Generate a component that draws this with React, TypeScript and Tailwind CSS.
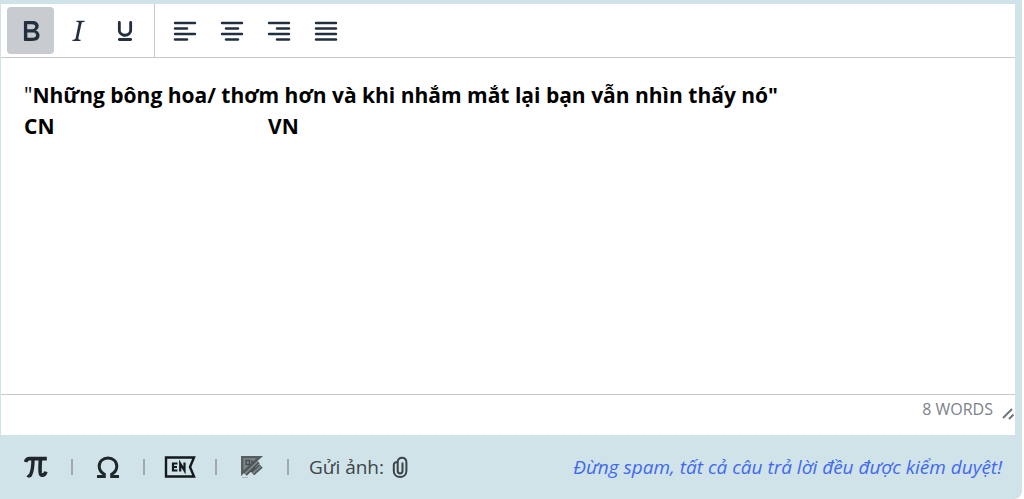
import { useState, type ReactNode } from "react";

const ALIGN_LINES = {
  left: ["M2 2h20", "M2 7.500h12", "M2 13h20", "M2 18.500h12"],
  center: ["M2 2h20", "M6 7.500h12", "M2 13h20", "M6 18.500h12"],
  right: ["M2 2h20", "M10 7.500h12", "M2 13h20", "M10 18.500h12"],
  justify: ["M2 2h20", "M2 7.500h20", "M2 13h20", "M2 18.500h20"],
};

type Align = keyof typeof ALIGN_LINES;

function AlignIcon({ align }: { align: Align }) {
  return (
    <svg
      viewBox="0 0 24 20"
      className="h-5 w-6"
      fill="none"
      stroke="#222f3e"
      strokeWidth="2.4"
      strokeLinecap="round"
    >
      {ALIGN_LINES[align].map((d) => (
        <path key={d} d={d} />
      ))}
    </svg>
  );
}

function BoldIcon() {
  return (
    <svg viewBox="0 0 24 24" className="size-[34px]" fill="#222f3e">
      <path
        fillRule="evenodd"
        d="M7.8 19c-.3 0-.5 0-.6-.2l-.2-.5V5.7c0-.2 0-.4.2-.5l.6-.2h5c1.5 0 2.7.3 3.5 1 .7.6 1.1 1.4 1.1 2.5a3 3 0 0 1-.6 1.9c-.4.6-1 1-1.6 1.2.4.1.9.3 1.3.6s.8.7 1 1.2c.4.4.5 1 .5 1.6 0 1.3-.4 2.3-1.3 3-.8.7-2.1 1-3.8 1H7.8Zm5-8.3c.6 0 1.2-.1 1.6-.5.4-.3.6-.7.6-1.3 0-1.1-.8-1.7-2.3-1.7H9.3v3.5h3.4Zm.5 6c.7 0 1.3-.1 1.7-.4.4-.4.6-.9.6-1.5s-.2-1-.7-1.4c-.4-.3-1-.4-2-.4H9.4v3.8h4Z"
      />
    </svg>
  );
}

function ItalicIcon() {
  return (
    <svg viewBox="0 0 24 24" className="size-[34px]" fill="#222f3e">
      <path
        fillRule="evenodd"
        d="m16.7 4.7-.1.9h-.3c-.6 0-1 0-1.4.3-.3.3-.4.6-.5 1.1l-2.1 9.800v.6c0 .5.4.8 1.4.8h.2l-.2.8H8l.2-.8h.2c1.1 0 1.8-.5 2-1.5l2-9.800.1-.5c0-.6-.4-.8-1.4-.8h-.3l.2-.9h5.8Z"
      />
    </svg>
  );
}

function UnderlineIcon() {
  return (
    <svg viewBox="0 0 24 24" className="size-[34px]" fill="#222f3e">
      <path
        fillRule="evenodd"
        d="M16 5c.6 0 1 .4 1 1v5.5a4 4 0 0 1-.4 1.8l-1 1.4a5.3 5.3 0 0 1-5.5 1 5 5 0 0 1-1.6-1c-.5-.4-.8-.9-1.1-1.4a4 4 0 0 1-.4-1.8V6c0-.6.4-1 1-1s1 .4 1 1v5.5c0 .3 0 .6.2 1l.6.7a3.3 3.3 0 0 0 2.2.8 3.4 3.4 0 0 0 2.2-.8c.3-.2.4-.5.6-.8l.2-.9V6c0-.6.4-1 1-1ZM8 17h8c.6 0 1 .4 1 1s-.4 1-1 1H8a1 1 0 0 1 0-2Z"
      />
    </svg>
  );
}

function ToolButton({
  label,
  active,
  onClick,
  children,
}: {
  label: string;
  active: boolean;
  onClick: () => void;
  children: ReactNode;
}) {
  return (
    <button
      type="button"
      aria-label={label}
      aria-pressed={active}
      onClick={onClick}
      className={`flex size-[47px] items-center justify-center rounded ${active ? "bg-[#c8cbcf]" : ""}`}
    >
      {children}
    </button>
  );
}

function PiIcon() {
  return (
    <svg viewBox="0 0 24 24" className="size-6" fill="none" stroke="#20272b">
      <path d="M1.500 7C2.300 4.300 3.600 3.600 5.600 3.600H22.800" strokeWidth="3.600" />
      <path d="M9 4c0 7-.6 12-2.400 15.800-.6 1.300-1.900 1.500-3 .5" strokeWidth="3.400" />
      <path d="M16.500 4c-.5 6-.6 10-.3 13.500.4 3.700 4.700 3.500 5.600-.8" strokeWidth="3.600" />
    </svg>
  );
}

function OmegaIcon() {
  return (
    <svg viewBox="0 0 24 24" className="size-6" fill="none" stroke="#20272b" strokeWidth="3">
      <path d="M1 21.500h7.300v-2.300C5 17.300 3.200 14.600 3.200 11.200 3.200 6.300 7 3 12 3s8.800 3.300 8.800 8.200c0 3.400-1.800 6.100-5.100 8v2.300H23" />
    </svg>
  );
}

function LanguageIcon() {
  return (
    <svg viewBox="0 0 32 24" className="h-6 w-8" fill="none" stroke="#14191c">
      <path d="M2 2.500h28l-4 9.500 4 9.500H2Z" strokeWidth="2.400" />
      <path d="M13.500 8.500H9v7h4.500M9 12h4M16.200 16.500V8.500l4.300 7V7.500" strokeWidth="2.200" />
    </svg>
  );
}

function DrawIcon() {
  return (
    <svg viewBox="0 0 24 24" className="size-6">
      <path fill="#565e61" d="M1 1h22L1 21Z" />
      <path fill="#7f898c" d="M3.500 3.200h13l-13 12Z" />
      <path d="M6 5.500h3.500v4H6ZM12 5v3" stroke="#454d50" strokeWidth="1.400" fill="none" />
      <path d="M5 19 18 6.500M12.500 18.500 21 11" stroke="#4a5255" strokeWidth="5" />
      <path d="M5 18.800 18 6.300M12.500 18.500 21 11" stroke="#7b8588" strokeWidth="2" />
      <path d="M2 22.500h6" stroke="#aeb9bc" />
    </svg>
  );
}

function ClipIcon() {
  return (
    <svg viewBox="0 0 16 24" className="h-6 w-4" fill="none" stroke="#3b4347" strokeWidth="2">
      <path d="M10.500 7.500v8.500a2.400 2.400 0 0 1-4.800 0V7C3 7 1.800 8 1.800 10v6c0 8 12.600 8 12.600 0V7.200c0-6-8.700-6-8.700-.2" />
    </svg>
  );
}

function FooterButton({ label, children }: { label: string; children: ReactNode }) {
  return (
    <>
      <button type="button" aria-label={label} className="flex w-[70px] justify-center">
        {children}
      </button>
      <span className="h-4 w-[2px] bg-[#a3a9ab]" />
    </>
  );
}

export default function App() {
  const [marks, setMarks] = useState<string[]>(["Bold"]);
  const [align, setAlign] = useState<Align | null>(null);

  const toggle = (mark: string) =>
    setMarks(marks.includes(mark) ? marks.filter((m) => m !== mark) : [...marks, mark]);

  return (
    <div className="min-h-screen bg-white pr-[2px] font-['Open_Sans','Noto_Sans',sans-serif]">
      <main className="flex min-h-screen flex-col rounded-br-lg bg-[#d0e3e8] pt-1">
        <section className="mr-[7px] ml-px flex flex-1 flex-col bg-white">
          <div role="toolbar" aria-label="Định dạng" className="flex border-b border-[#c8c8c8]">
            <div className="flex border-r border-[#c8c8c8] px-[6px] py-[3px]">
              <ToolButton label="Bold" active={marks.includes("Bold")} onClick={() => toggle("Bold")}>
                <BoldIcon />
              </ToolButton>
              <ToolButton label="Italic" active={marks.includes("Italic")} onClick={() => toggle("Italic")}>
                <ItalicIcon />
              </ToolButton>
              <ToolButton label="Underline" active={marks.includes("Underline")} onClick={() => toggle("Underline")}>
                <UnderlineIcon />
              </ToolButton>
            </div>
            <div className="flex px-[6px] py-[3px]">
              {(Object.keys(ALIGN_LINES) as Align[]).map((key) => (
                <ToolButton key={key} label={`Align ${key}`} active={align === key} onClick={() => setAlign(key)}>
                  <AlignIcon align={key} />
                </ToolButton>
              ))}
            </div>
          </div>

          <div
            role="textbox"
            aria-multiline="true"
            aria-label="Câu trả lời"
            contentEditable
            suppressContentEditableWarning
            spellCheck={false}
            className="flex-1 px-[23px] py-[22px] text-[21px] leading-[31px] text-black outline-none"
          >
            <p>
              "<strong>Những bông hoa/ thơm hơn và khi nhắm mắt lại bạn vẫn nhìn thấy nó"</strong>
            </p>
            <p className="flex font-bold">
              <span className="w-[244px]">CN</span>
              <span>VN</span>
            </p>
          </div>

          <div className="flex h-[41px] items-start justify-end gap-2 border-t border-[#c8c8c8] text-base leading-7 text-[#7b828a]">
            <span>8 WORDS</span>
            <svg viewBox="0 0 14 14" className="mt-3 size-[14px]" stroke="#6f767d" strokeWidth="2">
              <path d="M2 11 11 2M8 12l4.500-4.500" />
            </svg>
          </div>
        </section>

        <footer className="flex h-16 items-center justify-between pr-5 pl-px text-[19px]">
          <div className="flex items-center">
            <FooterButton label="Công thức">
              <PiIcon />
            </FooterButton>
            <FooterButton label="Ký tự đặc biệt">
              <OmegaIcon />
            </FooterButton>
            <FooterButton label="Ngôn ngữ">
              <LanguageIcon />
            </FooterButton>
            <FooterButton label="Vẽ hình">
              <DrawIcon />
            </FooterButton>
            <button type="button" className="ml-5 flex items-center gap-2 text-[#3d4447]">
              Gửi ảnh:
              <ClipIcon />
            </button>
          </div>
          <p className="text-[#4169f0] italic">Đừng spam, tất cả câu trả lời đều được kiểm duyệt!</p>
        </footer>
      </main>
    </div>
  );
}
